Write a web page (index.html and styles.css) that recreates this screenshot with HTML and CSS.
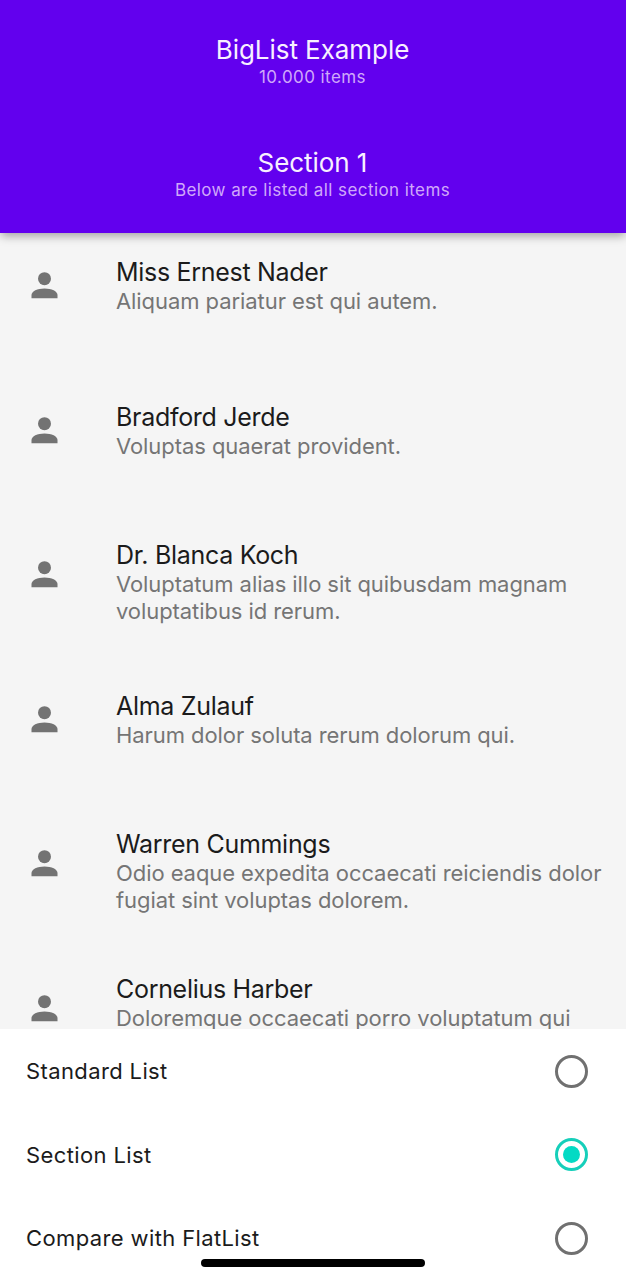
FILE: index.html
```html
<!DOCTYPE html>
<html lang="en">
<head>
<meta charset="utf-8">
<title>BigList Example</title>
<link rel="stylesheet" href="styles.css">
</head>
<body>
<svg class="defs"><symbol id="person" viewBox="0 0 27 27"><circle cx="13.5" cy="6.7" r="6.5"/><path d="M.5 26.3V23c0-3.7 5.9-6.5 13-6.5s13 2.8 13 6.5v3.3z"/></symbol></svg>
<div class="app">
  <header class="header">
    <div class="heading"><h1 class="heading-title">BigList Example</h1><p class="heading-sub">10.000 items</p></div>
    <div class="heading"><h2 class="heading-title">Section 1</h2><p class="heading-sub">Below are listed all section items</p></div>
  </header>
  <main class="list">
    <div class="item"><svg class="icon"><use href="#person"/></svg><div class="text"><div class="name">Miss Ernest Nader</div><div class="desc">Aliquam pariatur est qui autem.</div></div></div>
    <div class="item"><svg class="icon"><use href="#person"/></svg><div class="text"><div class="name">Bradford Jerde</div><div class="desc">Voluptas quaerat provident.</div></div></div>
    <div class="item tall"><svg class="icon"><use href="#person"/></svg><div class="text"><div class="name">Dr. Blanca Koch</div><div class="desc">Voluptatum alias illo sit quibusdam magnam<br>voluptatibus id rerum.</div></div></div>
    <div class="item"><svg class="icon"><use href="#person"/></svg><div class="text"><div class="name">Alma Zulauf</div><div class="desc">Harum dolor soluta rerum dolorum qui.</div></div></div>
    <div class="item tall"><svg class="icon"><use href="#person"/></svg><div class="text"><div class="name">Warren Cummings</div><div class="desc">Odio eaque expedita occaecati reiciendis dolor<br>fugiat sint voluptas dolorem.</div></div></div>
    <div class="item tall"><svg class="icon"><use href="#person"/></svg><div class="text"><div class="name">Cornelius Harber</div><div class="desc">Doloremque occaecati porro voluptatum qui</div></div></div>
  </main>
  <footer class="options">
    <div class="option"><span>Standard List</span><span class="radio"></span></div>
    <div class="option"><span>Section List</span><span class="radio checked"></span></div>
    <div class="option"><span>Compare with FlatList</span><span class="radio"></span></div>
    <div class="home-bar"></div>
  </footer>
</div>
</body>
</html>
```
FILE: styles.css
```css
* { box-sizing: border-box; }
body { margin: 0; font-family: Inter, "Liberation Sans", sans-serif; font-weight: 400; }
.defs { position: absolute; width: 0; height: 0; }
.app { width: 626px; height: 1280px; overflow: hidden; display: flex; flex-direction: column; background: #f5f5f5; }
.header { position: relative; z-index: 1; flex: none; height: 233px; padding-top: 34px; background: #6200ee; box-shadow: 0 4px 9px -1px rgba(0,0,0,.34); text-align: center; }
.heading { height: 112.5px; padding-right: 1px; }
.heading-title { margin: 0; font-size: 26px; line-height: 32px; font-weight: 400; color: #f8f0ff; letter-spacing: -.06px; }
.heading-sub { margin: 0; font-size: 17px; line-height: 22px; color: #d0a8fa; letter-spacing: .42px; }
.list { flex: none; height: 796px; overflow: hidden; }
.item { height: 144.5px; display: flex; padding: 24px 0 0 31px; }
.tall { padding-top: 18px; }
.icon { flex: none; width: 27px; height: 27px; margin: 15px 58px 0 0; fill: #737373; }
.tall .icon { margin-top: 21px; }
.text { white-space: nowrap; }
.name { font-size: 25px; line-height: 31px; color: #1b1b1b; letter-spacing: -.3px; }
.desc { font-size: 22px; line-height: 27px; color: #757575; letter-spacing: -.07px; }
.options { position: relative; flex: 1; padding-top: .5px; background: #fff; }
.option { height: 83.5px; display: flex; align-items: center; justify-content: space-between; padding: 0 38px 0 26px; font-size: 22px; color: #1b1b1b; letter-spacing: .38px; }
.radio { display: flex; align-items: center; justify-content: center; width: 33px; height: 33px; border: 3px solid #707070; border-radius: 50%; }
.checked { border-color: #16cfba; }
.checked::after { content: ""; width: 17px; height: 17px; border-radius: 50%; background: #03dac4; }
.home-bar { position: absolute; left: 201px; top: 230px; width: 224px; height: 8px; border-radius: 4px; background: #000; }
```
